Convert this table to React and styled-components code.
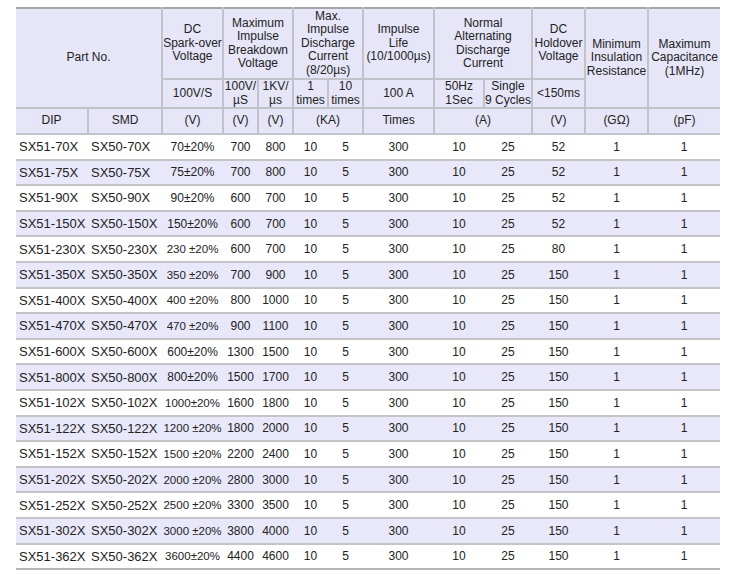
import React from 'react';
import styled, { createGlobalStyle } from 'styled-components';

const GlobalStyle = createGlobalStyle`
  body {
    margin: 0;
    background: #ffffff;
    font-family: "Liberation Sans", Arial, sans-serif;
    color: #222;
  }
`;

const Page = styled.div`
  padding: 7px 0 0 16px;
`;

const Table = styled.table`
  width: 704px;
  table-layout: fixed;
  border-collapse: collapse;
  border-top: 2px solid #a6a6a8;
  border-bottom: 2px solid #b4b4b8;
  font-family: "Liberation Sans", Arial, sans-serif;
`;

const HeadCell = styled.th`
  background: #e6e6f8;
  border: 2px solid #c2c2ca;
  border-top: none;
  font-weight: normal;
  font-size: 12px;
  line-height: 13.5px;
  color: #222;
  text-align: center;
  vertical-align: middle;
  padding: 0;
  height: ${(p) => p.$h || 'auto'};
  &:first-child { border-left: none; }
  &:last-child { border-right: none; }
`;

const Row = styled.tr`
  background: ${(p) => (p.$alt ? '#e8e8fa' : '#ffffff')};
  border-bottom: 2px solid #c4c4c8;
  &:last-child { border-bottom: none; }
`;

const Cell = styled.td`
  height: 23.6px;
  padding: 0;
  font-size: ${(p) => p.$size || '12px'};
  text-align: ${(p) => (p.$left ? 'left' : 'center')};
  padding-left: ${(p) => (p.$left ? '3px' : '0')};
  white-space: nowrap;
  vertical-align: middle;
  color: #222;
`;

const widths = [72, 74, 61, 35, 35, 35, 35, 71, 50, 48, 53, 63, 72];

const rows = [
  ['SX51-70X', 'SX50-70X', '70±20%', '700', '800', '52'],
  ['SX51-75X', 'SX50-75X', '75±20%', '700', '800', '52'],
  ['SX51-90X', 'SX50-90X', '90±20%', '600', '700', '52'],
  ['SX51-150X', 'SX50-150X', '150±20%', '600', '700', '52'],
  ['SX51-230X', 'SX50-230X', '230 ±20%', '600', '700', '80'],
  ['SX51-350X', 'SX50-350X', '350 ±20%', '700', '900', '150'],
  ['SX51-400X', 'SX50-400X', '400 ±20%', '800', '1000', '150'],
  ['SX51-470X', 'SX50-470X', '470 ±20%', '900', '1100', '150'],
  ['SX51-600X', 'SX50-600X', '600±20%', '1300', '1500', '150'],
  ['SX51-800X', 'SX50-800X', '800±20%', '1500', '1700', '150'],
  ['SX51-102X', 'SX50-102X', '1000±20%', '1600', '1800', '150'],
  ['SX51-122X', 'SX50-122X', '1200 ±20%', '1800', '2000', '150'],
  ['SX51-152X', 'SX50-152X', '1500 ±20%', '2200', '2400', '150'],
  ['SX51-202X', 'SX50-202X', '2000 ±20%', '2800', '3000', '150'],
  ['SX51-252X', 'SX50-252X', '2500 ±20%', '3300', '3500', '150'],
  ['SX51-302X', 'SX50-302X', '3000 ±20%', '3800', '4000', '150'],
  ['SX51-362X', 'SX50-362X', '3600±20%', '4400', '4600', '150'],
];

export default function App() {
  return (
    <Page>
      <GlobalStyle />
      <Table>
        <colgroup>
          {widths.map((w, i) => (
            <col key={i} style={{ width: w }} />
          ))}
        </colgroup>
        <thead>
          <tr>
            <HeadCell colSpan={2} rowSpan={2}>Part No.</HeadCell>
            <HeadCell $h="69px">DC<br />Spark-over<br />Voltage</HeadCell>
            <HeadCell colSpan={2}>Maximum<br />Impulse<br />Breakdown<br />Voltage</HeadCell>
            <HeadCell colSpan={2}>Max.<br />Impulse<br />Discharge<br />Current<br />(8/20µs)</HeadCell>
            <HeadCell>Impulse<br />Life<br />(10/1000µs)</HeadCell>
            <HeadCell colSpan={2}>Normal<br />Alternating<br />Discharge<br />Current</HeadCell>
            <HeadCell>DC<br />Holdover<br />Voltage</HeadCell>
            <HeadCell rowSpan={2}>Minimum<br />Insulation<br />Resistance</HeadCell>
            <HeadCell rowSpan={2}>Maximum<br />Capacitance<br />(1MHz)</HeadCell>
          </tr>
          <tr>
            <HeadCell $h="26px">100V/S</HeadCell>
            <HeadCell>100V/<br />µS</HeadCell>
            <HeadCell>1KV/<br />µs</HeadCell>
            <HeadCell>1<br />times</HeadCell>
            <HeadCell>10<br />times</HeadCell>
            <HeadCell>100 A</HeadCell>
            <HeadCell>50Hz<br />1Sec</HeadCell>
            <HeadCell>Single<br />9 Cycles</HeadCell>
            <HeadCell>&lt;150ms</HeadCell>
          </tr>
          <tr>
            <HeadCell $h="24px">DIP</HeadCell>
            <HeadCell>SMD</HeadCell>
            <HeadCell>(V)</HeadCell>
            <HeadCell>(V)</HeadCell>
            <HeadCell>(V)</HeadCell>
            <HeadCell colSpan={2}>(KA)</HeadCell>
            <HeadCell>Times</HeadCell>
            <HeadCell colSpan={2}>(A)</HeadCell>
            <HeadCell>(V)</HeadCell>
            <HeadCell>(GΩ)</HeadCell>
            <HeadCell>(pF)</HeadCell>
          </tr>
        </thead>
        <tbody>
          {rows.map((r, i) => (
            <Row key={r[0]} $alt={i % 2 === 1}>
              <Cell $left $size="13px">{r[0]}</Cell>
              <Cell $left $size="13px">{r[1]}</Cell>
              <Cell $size={r[2].length <= 7 ? '12px' : '11.5px'}>{r[2]}</Cell>
              <Cell>{r[3]}</Cell>
              <Cell>{r[4]}</Cell>
              <Cell>10</Cell>
              <Cell>5</Cell>
              <Cell>300</Cell>
              <Cell>10</Cell>
              <Cell>25</Cell>
              <Cell>{r[5]}</Cell>
              <Cell>1</Cell>
              <Cell>1</Cell>
            </Row>
          ))}
        </tbody>
      </Table>
    </Page>
  );
}
